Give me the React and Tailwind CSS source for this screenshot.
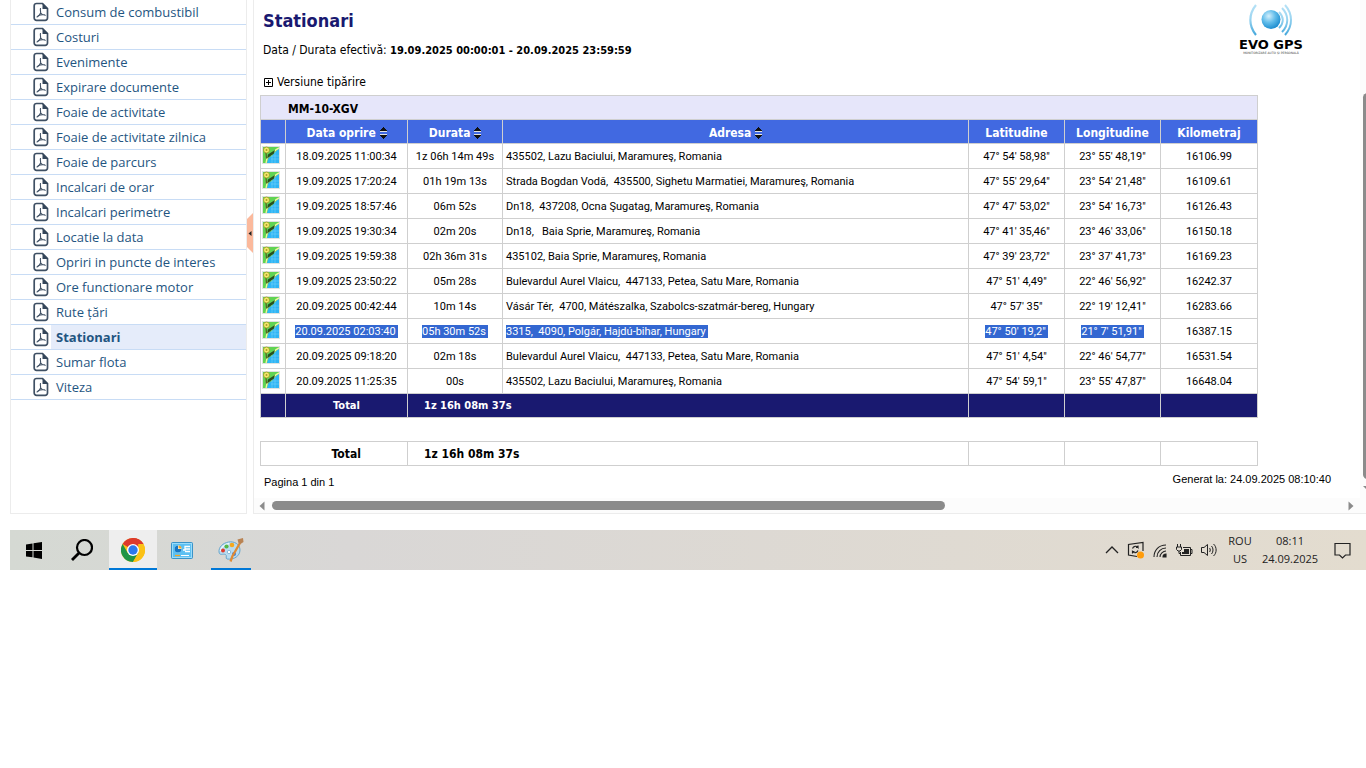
import React, { useState } from "react";

const reports = [
  "Consum de combustibil",
  "Costuri",
  "Evenimente",
  "Expirare documente",
  "Foaie de activitate",
  "Foaie de activitate zilnica",
  "Foaie de parcurs",
  "Incalcari de orar",
  "Incalcari perimetre",
  "Locatie la data",
  "Opriri in puncte de interes",
  "Ore functionare motor",
  "Rute țări",
  "Stationari",
  "Sumar flota",
  "Viteza",
];

const stops = [
  ["18.09.2025 11:00:34", "1z 06h 14m 49s", "435502, Lazu Baciului, Maramureş, Romania", "47° 54' 58,98\"", "23° 55' 48,19\"", "16106.99"],
  ["19.09.2025 17:20:24", "01h 19m 13s", "Strada Bogdan Vodă,  435500, Sighetu Marmatiei, Maramureş, Romania", "47° 55' 29,64\"", "23° 54' 21,48\"", "16109.61"],
  ["19.09.2025 18:57:46", "06m 52s", "Dn18,  437208, Ocna Şugatag, Maramureş, Romania", "47° 47' 53,02\"", "23° 54' 16,73\"", "16126.43"],
  ["19.09.2025 19:30:34", "02m 20s", "Dn18,   Baia Sprie, Maramureş, Romania", "47° 41' 35,46\"", "23° 46' 33,06\"", "16150.18"],
  ["19.09.2025 19:59:38", "02h 36m 31s", "435102, Baia Sprie, Maramureş, Romania", "47° 39' 23,72\"", "23° 37' 41,73\"", "16169.23"],
  ["19.09.2025 23:50:22", "05m 28s", "Bulevardul Aurel Vlaicu,  447133, Petea, Satu Mare, Romania", "47° 51' 4,49\"", "22° 46' 56,92\"", "16242.37"],
  ["20.09.2025 00:42:44", "10m 14s", "Vásár Tér,  4700, Mátészalka, Szabolcs-szatmár-bereg, Hungary", "47° 57' 35\"", "22° 19' 12,41\"", "16283.66"],
  ["20.09.2025 02:03:40", "05h 30m 52s", "3315,  4090, Polgár, Hajdú-bihar, Hungary", "47° 50' 19,2\"", "21° 7' 51,91\"", "16387.15"],
  ["20.09.2025 09:18:20", "02m 18s", "Bulevardul Aurel Vlaicu,  447133, Petea, Satu Mare, Romania", "47° 51' 4,54\"", "22° 46' 54,77\"", "16531.54"],
  ["20.09.2025 11:25:35", "00s", "435502, Lazu Baciului, Maramureş, Romania", "47° 54' 59,1\"", "23° 55' 47,87\"", "16648.04"],
];

const selectedStop = 7;

function PdfIcon() {
  return (
    <svg width="16" height="20" viewBox="0 0 16 20" fill="none" stroke="#3f5064">
      <path d="M3.5 1.5H9.5L14.5 6.5V16a2.3 2.3 0 0 1-2.3 2.3H3.5A2.3 2.3 0 0 1 1.2 16V3.800A2.3 2.3 0 0 1 3.500 1.500Z" strokeWidth="1.7" />
      <path d="M9.500 1L15 6.500V7H9.500Z" fill="#34465a" stroke="none" />
      <path d="M7.500 6.500C6.900 8.300 7.900 9.500 7.600 11C7 12.600 5.600 14 4 15M7.700 11C8.600 12.500 10 13.200 12.300 13.200M5.300 13.500C7 12.800 9 12.500 11.500 12.800" strokeWidth="1.1" strokeLinecap="round" />
    </svg>
  );
}

function MapIcon() {
  return (
    <svg width="18" height="18" viewBox="0 0 18 18" className="block">
      <rect width="18" height="18" fill="#dfe3e0" />
      <rect x="1" y="1" width="16" height="16" fill="#5fd352" />
      <path d="M17 3C13 5 12 9 8 11C5 13 6 15 5 17H17Z" fill="#2fb5f5" />
      <path d="M17 2C12 4 11 8 7 10C4 12 5 15 4 17" fill="none" stroke="#eef7a0" strokeWidth="1.4" />
      <path d="M9 6.500L13 4L12 7.500L5 12.500L6 8.500Z" fill="#27501f" />
      <path d="M9 13h8M9 10h8M13 6v11M10 10v7" stroke="#7fd4fb" strokeWidth=".5" />
      <path d="M4 6.500L4.500 12.500" stroke="#59621e" strokeWidth="1.2" />
      <circle cx="4.500" cy="4" r="3" fill="#f3ec6b" stroke="#9b9423" strokeWidth=".8" />
      <circle cx="4.500" cy="4" r="1" fill="#a79c2a" />
    </svg>
  );
}

function SortIcon() {
  return (
    <svg width="7" height="12" viewBox="0 0 7 12" shapeRendering="crispEdges" className="inline-block align-[-2px]">
      <path d="M3 0h1v1h1v1h1v1h1v1H0V3h1V2h1V1h1ZM0 8h7v1H6v1H5v1H4v1H3v-1H2v-1H1V9H0Z" fill="#111" />
      <path d="M0 4h7v1H0ZM0 7h7v1H0Z" fill="#e2e2e2" />
    </svg>
  );
}

function Logo() {
  return (
    <div className="flex w-[64px] flex-col items-center font-['DejaVu_Sans',sans-serif] whitespace-nowrap">
      <svg width="46" height="34" viewBox="0 0 46 34" fill="none">
        <defs>
          <radialGradient id="globe" cx="38%" cy="32%" r="70%">
            <stop offset="0" stopColor="#d4effc" />
            <stop offset=".5" stopColor="#62bdea" />
            <stop offset="1" stopColor="#1b8ccf" />
          </radialGradient>
          <linearGradient id="wave" x1="0" y1="0" x2="0" y2="1">
            <stop offset="0" stopColor="#b5e1f6" />
            <stop offset=".45" stopColor="#9bd5f1" />
            <stop offset="1" stopColor="#45a8dc" />
          </linearGradient>
        </defs>
        <circle cx="23" cy="16.500" r="9.500" fill="url(#globe)" />
        <path d="M8 2C.5 11 .5 23 8 32" stroke="url(#wave)" strokeWidth="2.200" />
        <path d="M31 9C36 14 36 20 31 25M34 5C41 12 41 22 34 29M37 2C45 11 45 23 37 32" stroke="url(#wave)" strokeWidth="2" />
      </svg>
      <span className="mt-[2px] text-[13px] leading-[11px] font-bold text-black">EVO GPS</span>
      <span className="mt-px text-[3px] leading-[4px] text-[#444]">MONITORIZARE AUTO ȘI PERSONALĂ</span>
    </div>
  );
}

function Columns() {
  return (
    <colgroup>
      <col className="w-[25px]" />
      <col className="w-[122px]" />
      <col className="w-[95px]" />
      <col />
      <col className="w-[96px]" />
      <col className="w-[96px]" />
      <col className="w-[97px]" />
    </colgroup>
  );
}

function Sidebar({ active, onSelect }) {
  return (
    <nav className="w-[237px] shrink-0 border-x border-b border-[#ececec] font-['Open_Sans',sans-serif] text-[13px]">
      <ul>
        {reports.map((name) => (
          <li key={name} className="flex h-[25px] items-stretch border-b border-[#c8dcf5]">
            <span className="flex w-[40px] shrink-0 items-center justify-end pr-[2px]">
              <PdfIcon />
            </span>
            <a
              href="#"
              onClick={(e) => {
                e.preventDefault();
                onSelect(name);
              }}
              className={`flex-1 pl-[5px] leading-6 text-[#1f5581] ${
                active === name ? "bg-[#e5ecfa] font-bold" : ""
              }`}
            >
              {name}
            </a>
          </li>
        ))}
      </ul>
    </nav>
  );
}

function StopsTable() {
  const cell = "border border-[#cfcfcf] p-0";
  const head = "border border-[#cfcfcf] px-0 pt-[2px] pb-0";
  return (
    <table className="w-full table-fixed border-collapse text-[11px] whitespace-pre text-black">
      <Columns />
      <thead className="text-[12px] leading-5">
        <tr className="h-6 bg-[#e6e6fa]">
          <th colSpan={7} className={`${head} pl-[27px] text-left`}>
            MM-10-XGV
          </th>
        </tr>
        <tr className="h-6 bg-[#4169e1] text-white">
          <th className={head}></th>
          <th className={head}>Data oprire <SortIcon /></th>
          <th className={head}>Durata <SortIcon /></th>
          <th className={head}>Adresa <SortIcon /></th>
          <th className={head}>Latitudine</th>
          <th className={head}>Longitudine</th>
          <th className={head}>Kilometraj</th>
        </tr>
      </thead>
      <tbody className="font-[Roboto,sans-serif]">
        {stops.map((stop, row) => (
          <tr key={stop[0]} className="h-[25px] text-center">
            <td className={`${cell} pb-[3px] pl-px`}>
              <MapIcon />
            </td>
            {stop.map((value, i) => (
              <td key={i} className={`${cell} pt-[2px] ${i === 2 ? "pl-[3px] text-left" : ""}`}>
                {row === selectedStop && i < 5 ? (
                  <span className="bg-[#3367d1] pr-[2px] text-white">{value}</span>
                ) : (
                  value
                )}
              </td>
            ))}
          </tr>
        ))}
      </tbody>
      <tfoot>
        <tr className="h-6 bg-[#191970] font-bold text-white">
          <td className={head}></td>
          <td className={`${head} text-center`}>Total</td>
          <td colSpan={2} className={`${head} pl-4`}>1z 16h 08m 37s</td>
          <td className={head}></td>
          <td className={head}></td>
          <td className={head}></td>
        </tr>
      </tfoot>
    </table>
  );
}

function GrandTotal() {
  const cell = "border border-[#cfcfcf] p-0";
  return (
    <table className="mt-[23px] w-full table-fixed border-collapse text-[12px] font-bold text-black">
      <Columns />
      <tbody>
        <tr className="h-6">
          <td className="border-y border-l border-[#cfcfcf] p-0"></td>
          <td className="border-y border-r border-[#cfcfcf] p-0 text-center">Total</td>
          <td colSpan={2} className={`${cell} pl-4`}>1z 16h 08m 37s</td>
          <td className={cell}></td>
          <td className={cell}></td>
          <td className={cell}></td>
        </tr>
      </tbody>
    </table>
  );
}

function Report({ title }) {
  return (
    <main className="flex min-w-0 flex-1 flex-col border-b border-l border-[#ececec]">
      <div className="flex flex-1">
        <div className="min-w-0 flex-1 pl-[6px] font-['DejaVu_Sans_Condensed','DejaVu_Sans',sans-serif]">
          <header className="flex h-[95px] justify-between pr-[57px] pl-[3px] text-[12px] leading-4 text-black">
            <div className="pt-[9px]">
              <h1 className="text-[18px] leading-6 font-bold text-[#191970]">{title}</h1>
              <p className="mt-[9px]">
                Data / Durata efectivă: <b className="text-[11px]">19.09.2025 00:00:01 - 20.09.2025 23:59:59</b>
              </p>
              <button type="button" className="mt-[15px] flex items-center gap-1 pl-px">
                <svg width="9" height="9" viewBox="0 0 9 9" stroke="#000" fill="none">
                  <path d="M.5 .5h8v8h-8ZM2 4.500h5M4.500 2v5" />
                </svg>
                Versiune tipărire
              </button>
            </div>
            <div className="pt-[3px]">
              <Logo />
            </div>
          </header>
          <div className="pr-[102px]">
            <StopsTable />
            <GrandTotal />
          </div>
          <footer className="flex justify-between pt-[5px] pr-[29px] pl-[4px] font-['Liberation_Sans',Arial,sans-serif] text-[11px] leading-4 text-black">
            <span className="pt-[3px]">Pagina 1 din 1</span>
            <span>Generat la: 24.09.2025 08:10:40</span>
          </footer>
        </div>
        {/* vertical scrollbar, cut off by the window edge */}
        <div className="flex w-[6px] shrink-0 flex-col overflow-hidden bg-[#fcfcfc] pt-[93px] pl-[3px]">
          <div className="w-[9px] flex-1 rounded-full bg-[#8b8b8b]"></div>
          <svg width="8" height="4" viewBox="0 0 8 4" className="mt-[7px] mb-2 shrink-0">
            <path d="M0 0h8L4 4Z" fill="#8b8b8b" />
          </svg>
        </div>
      </div>
      <div className="flex h-[15px] items-center bg-[#fcfcfc] pr-3 pl-[5px]">
        <svg width="6" height="10" viewBox="0 0 6 10">
          <path d="M5.500 .5v9L.5 5Z" fill="#8b8b8b" />
        </svg>
        <div className="mx-[7px] flex-1">
          <div className="h-[9px] w-[63%] rounded-full bg-[#8b8b8b]"></div>
        </div>
        <svg width="6" height="10" viewBox="0 0 6 10">
          <path d="M.5 .5v9L5.500 5Z" fill="#8b8b8b" />
        </svg>
      </div>
    </main>
  );
}

function Taskbar() {
  return (
    <footer className="mt-4 flex h-10 items-stretch justify-between bg-linear-to-r from-[#d5d9d3] via-[#d9d7d6] via-25% to-[#e3dccf] text-black">
      <div className="flex">
        <button type="button" aria-label="Start" className="flex w-12 items-center justify-center">
          <svg width="16" height="17" viewBox="0 0 16 17">
            <path d="M0 2.500L6.500 1.500V8H0ZM7.500 1.300L16 0V8H7.500ZM0 9H6.500V15.300L0 14.400ZM7.500 9H16V17L7.500 15.600Z" />
          </svg>
        </button>
        <button type="button" aria-label="Search" className="flex w-12 items-center justify-center">
          <svg width="22" height="22" viewBox="0 0 22 22" fill="none" stroke="#000" strokeWidth="2.200">
            <circle cx="13.500" cy="8.500" r="7.500" />
            <path d="M8 14L1 21" strokeWidth="2.800" />
          </svg>
        </button>
        <button type="button" aria-label="Chrome" className="ml-[3px] flex w-12 items-center justify-center border-b-2 border-[#0078d7] bg-[#eeeeee] pt-[2px]">
          <svg width="24" height="24" viewBox="0 0 24 24">
            <circle cx="12" cy="12" r="12" fill="#fbc116" />
            <path d="M12 12L1.600 6A12 12 0 0 1 22.400 6Z" fill="#dc3a2c" />
            <path d="M12 6H22.400A12 12 0 0 0 12 0Z" fill="#dc3a2c" />
            <path d="M1.600 6A12 12 0 0 0 12 24L17.200 15L12 12L6.800 15Z" fill="#1f9447" />
            <path d="M22.400 6A12 12 0 0 1 12 24L17.200 15L17.200 6Z" fill="#fbc116" />
            <circle cx="12" cy="12" r="6" fill="#fff" />
            <circle cx="12" cy="12" r="4.700" fill="#2b78ec" />
          </svg>
        </button>
        <button type="button" aria-label="Control panel" className="flex w-[50px] items-center justify-center">
          <svg width="22" height="17" viewBox="0 0 22 17">
            <rect x=".5" y=".5" width="21" height="16" rx="1" fill="#5cc0f2" stroke="#3a93c8" />
            <rect x="1.500" y="1.500" width="19" height="14" fill="none" stroke="#9bdcfa" />
            <circle cx="7" cy="7" r="3.500" fill="#fff" />
            <path d="M7 7V3.500A3.500 3.500 0 1 0 10.500 7Z" fill="#1576c4" />
            <path d="M7.500 6.500V3.500A3.200 3.200 0 0 1 10.500 6.500Z" fill="#f6a623" />
            <path d="M12 8h2V4.500h5M14 7h5M14 9.500h5" stroke="#fff" strokeWidth="1.300" fill="none" />
            <path d="M4 13.500h5" stroke="#f6a623" strokeWidth="1.300" />
            <path d="M10 13.500h8" stroke="#fff" />
          </svg>
        </button>
        <button type="button" aria-label="Paint" className="ml-1 flex w-10 items-center justify-center border-b-2 border-[#0078d7] pt-[2px]">
          <svg width="26" height="24" viewBox="0 0 26 24">
            <path d="M10.500 4C16 3 22 6 22 12C22 18 16 22 9 21C7 20.500 9.500 17.500 7.500 16.500C5 15.500 1.500 18 1 14C.5 9 5 5 10.500 4Z" fill="#b9dcf0" stroke="#6aa7cd" />
            <path d="M11 5.500C6 6.500 2.500 10 2.500 13" fill="none" stroke="#e8f6fd" strokeWidth="1.500" />
            <circle cx="5" cy="12.500" r="2" fill="#df3b2c" />
            <circle cx="8.500" cy="8.500" r="2.100" fill="#53b848" />
            <circle cx="14" cy="7" r="2.300" fill="#f5a81f" />
            <circle cx="11" cy="14" r="1.700" fill="#fff" stroke="#6aa7cd" strokeWidth=".7" />
            <circle cx="16" cy="16" r="2" fill="#3d7fd6" />
            <path d="M22 5L14.500 18L12.500 23.500" stroke="#df8b34" strokeWidth="2.300" fill="none" />
            <path d="M19.500 1.500L25 0L25.500 4L22.500 6L20.500 5Z" fill="#b98353" />
          </svg>
        </button>
      </div>
      <div className="flex items-center pr-[15px] font-['Open_Sans',sans-serif] text-[11px] leading-[18px] text-[#222]">
        <svg width="14" height="8" viewBox="0 0 14 8" fill="none" stroke="#222" strokeWidth="1.300">
          <path d="M1 7L7 1L13 7" />
        </svg>
        <svg width="18" height="18" viewBox="0 0 18 18" fill="none" stroke="#222" strokeWidth="1.200" className="ml-2">
          <path d="M10 15.500L1.500 14V3.500L16 1.500V10" />
          <path d="M5.500 7.500C6.500 5 9.500 4.500 11 6.500V4.500M11 6.500H9M11 9.500C10 12 7 12.500 5.500 10.500V12.500M5.500 10.500H7.500" />
          <circle cx="13.500" cy="14" r="3.500" fill="#ff9c0a" stroke="none" />
        </svg>
        <svg width="15" height="15" viewBox="0 0 15 15" fill="none" stroke="#222" strokeWidth="1.100" className="ml-2">
          <path d="M1 14C1 7 6 2 13 2M4 14C4 9 8 5 13 5M7 14C7 11 10 8 13 8" />
          <path d="M10 14C10 12 11 11 13 11V14Z" fill="#222" />
        </svg>
        <svg width="17" height="13" viewBox="0 0 17 13" fill="none" stroke="#222" className="ml-2">
          <path d="M7 3.500H14.500V11.500H4.500V8M14.500 5.500H16V9.500H14.500" />
          <path d="M8 5H13V10H6V8H8Z" fill="#222" stroke="none" />
          <path d="M1.500 0V3M4.500 0V3M.5 3H5.500V5.500L4 7H2L.5 5.500ZM3 7V9.500H4.500" />
        </svg>
        <svg width="17" height="14" viewBox="0 0 17 14" fill="none" stroke="#222" className="ml-2">
          <path d="M.5 4.500H3L6.500 1.500V12.500L3 9.500H.5Z" />
          <path d="M8.500 5C9.500 6 9.500 8 8.500 9M10.500 3C12.500 5 12.500 9 10.500 11M12.500 1C16 4 16 10 12.500 13" />
        </svg>
        <div className="ml-2 w-7 text-center">
          ROU
          <br />
          US
        </div>
        <div className="ml-[7px] w-[58px] text-center">
          08:11
          <br />
          24.09.2025
        </div>
        <svg width="17" height="17" viewBox="0 0 17 17" fill="none" stroke="#222" strokeWidth="1.200" className="ml-[15px]">
          <path d="M1 1.500H16V13H11.500L8.500 16L5.500 13H1Z" />
        </svg>
      </div>
    </footer>
  );
}

export default function App() {
  const [active, setActive] = useState("Stationari");

  return (
    <div className="bg-white pl-[10px]">
      <div className="flex min-h-[514px]">
        <Sidebar active={active} onSelect={setActive} />
        <button
          type="button"
          aria-label="Collapse sidebar"
          className="mt-[213px] flex h-10 w-[6px] shrink-0 items-center justify-center bg-[#fbb99c] [clip-path:polygon(0_15%,100%_0,100%_100%,0_85%)]"
        >
          <svg width="4" height="5" viewBox="0 0 4 5">
            <path d="M3.500 0v5L.5 2.500Z" fill="#222" />
          </svg>
        </button>
        <Report title={active} />
      </div>
      <Taskbar />
    </div>
  );
}
